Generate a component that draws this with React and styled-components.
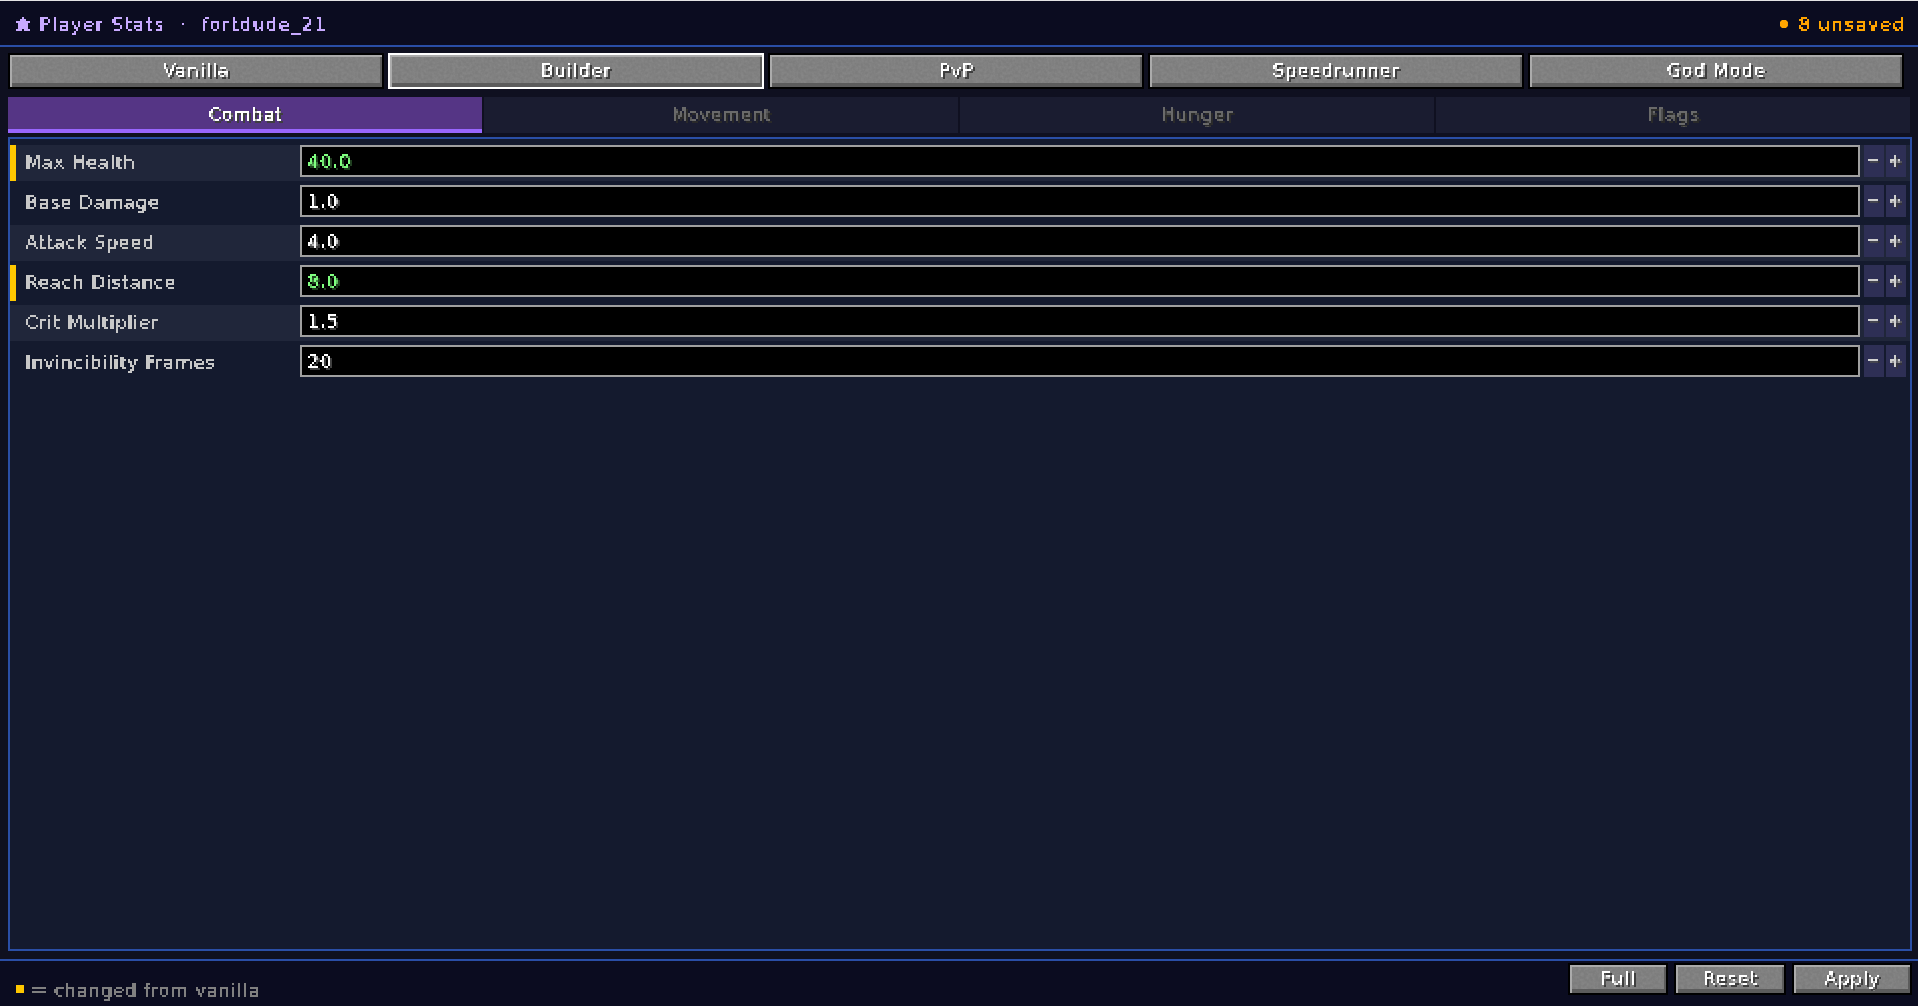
import React from 'react';
import styled, { createGlobalStyle, css } from 'styled-components';

const presets = ['Vanilla', 'Builder', 'PvP', 'Speedrunner', 'God Mode'];
const tabs = [
	{ name: 'Combat', spacing: 0.5 },
	{ name: 'Movement', spacing: 0.5 },
	{ name: 'Hunger', spacing: 1.2 },
	{ name: 'Flags', spacing: 1.2 },
];
const stats = [
	{ label: 'Max Health', value: '40.0', changed: true },
	{ label: 'Base Damage', value: '1.0' },
	{ label: 'Attack Speed', value: '4.0' },
	{ label: 'Reach Distance', value: '8.0', changed: true },
	{ label: 'Crit Multiplier', value: '1.5' },
	{ label: 'Invincibility Frames', value: '20' },
];

const noise = `url("data:image/svg+xml,%3Csvg xmlns='http://www.w3.org/2000/svg' width='160' height='80'%3E%3Cfilter id='n'%3E%3CfeTurbulence type='fractalNoise' baseFrequency='.35' numOctaves='2' seed='4'/%3E%3CfeColorMatrix values='0 0 0 0 .5 0 0 0 0 .5 0 0 0 0 .5 .9 0 0 0 -.3'/%3E%3C/filter%3E%3Crect width='160' height='80' filter='url(%23n)' opacity='.35'/%3E%3C/svg%3E")`;

const GlobalStyle = createGlobalStyle`
	html, body {
		margin: 0;
		height: 100%;
		overflow: hidden;
		background: #0f1020;
	}
`;

const pixelText = css`
	font-family: 'DejaVu Sans', sans-serif;
	line-height: 20px;
	white-space: pre;
`;

// text blocks snapped to the 2px grid of the game font
const Txt = styled.span`
	${pixelText}
	display: inline-block;
	padding: 2px 4px;
	margin: -2px -4px;
	font-size: ${(p) => p.$size || 18}px;
	letter-spacing: ${(p) => p.$spacing ?? 1}px;
	color: ${(p) => p.$color || '#fff'};
	filter: url(#pixel);
	text-shadow: ${(p) => (p.$shadow ? `2px 2px 0 ${p.$shadow}` : 'none')};
`;

const Page = styled.div`
	display: flex;
	flex-direction: column;
	height: 100vh;
`;

const Header = styled.header`
	display: flex;
	align-items: center;
	justify-content: space-between;
	box-sizing: border-box;
	height: 47px;
	padding: 2px 13px 0 16px;
	background: #0b0c20;
	border-top: 1px solid #e4e4e4;
	border-bottom: 2px solid #2a4ea6;
`;

const Title = styled.div`
	display: flex;
	align-items: center;
`;

const TitleName = styled.div`
	margin-left: 9px;
`;

const TitleDot = styled.div`
	margin-left: 16px;
`;

const TitleUser = styled.div`
	margin-left: 16px;
`;

const Unsaved = styled.div`
	display: flex;
	align-items: center;
	gap: 10px;
`;

const Dot = styled.i`
	display: block;
	width: 8px;
	height: 8px;
	background: #ffa500;
	clip-path: polygon(25% 0, 75% 0, 100% 25%, 100% 75%, 75% 100%, 25% 100%, 0 75%, 0 25%);
`;

const McButton = styled.button`
	display: flex;
	align-items: center;
	justify-content: center;
	box-sizing: border-box;
	padding: 0 0 2px;
	border: 2px solid ${(p) => (p.$selected ? '#fff' : '#000')};
	background-color: #7d7d7d;
	background-image: ${noise};
	box-shadow:
		inset 2px 2px 0 #ababab,
		inset -2px 0 0 #5c5c5c,
		inset 0 -4px 0 #5c5c5c;
`;

const PresetRow = styled.div`
	display: grid;
	grid-template-columns: repeat(5, 1fr);
	gap: 4px;
	height: 36px;
	margin: 6px 14px 0 8px;

	${McButton} {
		height: 36px;
	}
`;

const TabRow = styled.div`
	display: grid;
	grid-template-columns: repeat(4, 1fr);
	gap: 2px;
	height: 36px;
	margin: 8px 8px 0;
`;

const Tab = styled.div`
	display: flex;
	align-items: center;
	justify-content: center;
	box-sizing: border-box;
	padding-top: 2px;
	background: ${(p) => (p.$active ? '#553585' : '#1a1c30')};
	border-bottom: 4px solid ${(p) => (p.$active ? '#9966ff' : '#1a1c30')};
`;

const Panel = styled.main`
	flex: 1;
	display: flex;
	flex-direction: column;
	gap: 4px;
	margin: 4px 6px 0 8px;
	padding: 6px 0 0;
	background: #141a2e;
	border: 2px solid #2a4ea6;
`;

const Row = styled.div`
	display: flex;
	box-sizing: border-box;
	height: 36px;
	padding-right: 4px;
	background: ${(p) => (p.$alt ? '#20263a' : 'transparent')};
	border-left: 6px solid ${(p) => (p.$changed ? '#ffc800' : 'transparent')};
`;

const Label = styled.div`
	flex: 0 0 284px;
	display: flex;
	align-items: center;
	box-sizing: border-box;
	padding: 0 0 2px 9px;
`;

const Field = styled.div`
	flex: 1;
	display: flex;
	align-items: center;
	box-sizing: border-box;
	height: 32px;
	padding-left: 5px;
	background: #000;
	border: 2px solid #a0a0a0;
`;

const Step = styled.div`
	flex: 0 0 20px;
	display: flex;
	align-items: center;
	justify-content: center;
	height: 32px;
	margin-left: ${(p) => p.$gap}px;
	padding: 0 2px 2px 0;
	box-sizing: border-box;
	background: #2e2f55;
`;

const Footer = styled.footer`
	display: flex;
	justify-content: space-between;
	box-sizing: border-box;
	height: 47px;
	margin-top: 8px;
	padding: 2px 6px 0 16px;
	background: #0b0c20;
	border-top: 2px solid #2a4ea6;
`;

const Legend = styled.div`
	display: flex;
	align-items: center;
	gap: 5px;
	height: 22px;
	margin-top: 16px;
`;

const LegendMark = styled.i`
	display: block;
	width: 8px;
	height: 8px;
	margin-bottom: 2px;
	background: #ffc800;
`;

const Actions = styled.div`
	display: flex;
	gap: 6px;

	${McButton} {
		height: 32px;
	}
`;

const ActionButton = styled(McButton)`
	width: ${(p) => p.$width}px;
`;

function Star() {
	return (
		<svg width="14" height="14" viewBox="0 0 7 7" shapeRendering="crispEdges" fill="#c8aaff">
			<path d="M3 0h1v1h1v1h2v1H6v3h1v1H4V6H3v1H0V6h1V3H0V2h2V1h1z" />
		</svg>
	);
}

function App() {
	return (
		<Page>
			<GlobalStyle />
			<svg width="0" height="0" style={{ position: 'absolute' }} aria-hidden="true">
				<filter id="pixel" x="-2%" y="-2%" width="104%" height="104%" colorInterpolationFilters="sRGB">
					<feFlood x="1" y="1" width="1" height="1" floodColor="#000" />
					<feComposite width="2" height="2" />
					<feTile result="grid" />
					<feComposite in="SourceGraphic" in2="grid" operator="in" />
					<feConvolveMatrix order="2" kernelMatrix="1 1 1 1" divisor="1" preserveAlpha="false" />
					<feComponentTransfer>
						<feFuncA type="discrete" tableValues="0 1 1 1" />
					</feComponentTransfer>
				</filter>
			</svg>
			<Header>
				<Title>
					<Star />
					<TitleName>
						<Txt $color="#c8aaff" $spacing={1.5}>Player Stats</Txt>
					</TitleName>
					<TitleDot>
						<Txt $color="#c8aaff" $size={12}>·</Txt>
					</TitleDot>
					<TitleUser>
						<Txt $color="#c8aaff" $spacing={1.5}>fortdude_21</Txt>
					</TitleUser>
				</Title>
				<Unsaved>
					<Dot />
					<Txt $color="#ffa500" $spacing={1.5}>8 unsaved</Txt>
				</Unsaved>
			</Header>
			<PresetRow>
				{presets.map((name) => (
					<McButton key={name} $selected={name === 'Builder'}>
						<Txt $shadow="#3f3f3f">{name}</Txt>
					</McButton>
				))}
			</PresetRow>
			<TabRow>
				{tabs.map((tab) => (
					<Tab key={tab.name} $active={tab.name === 'Combat'}>
						{tab.name === 'Combat' ? (
							<Txt $shadow="#3f3f3f" $spacing={tab.spacing}>{tab.name}</Txt>
						) : (
							<Txt $color="#6a6a6a" $shadow="#2a2a2a" $spacing={tab.spacing}>
								{tab.name}
							</Txt>
						)}
					</Tab>
				))}
			</TabRow>
			<Panel>
				{stats.map((stat, i) => (
					<Row key={stat.label} $alt={i % 2 === 0} $changed={stat.changed}>
						<Label>
							<Txt $color="#c8c8c8" $spacing={0.8}>{stat.label}</Txt>
						</Label>
						<Field>
							<Txt
								$color={stat.changed ? '#80ff80' : '#fff'}
								$shadow={stat.changed ? '#203f20' : '#3f3f3f'}
							>
								{stat.value}
							</Txt>
						</Field>
						<Step $gap={4}>
							<Txt $color="#d0d0d0" $shadow="#34343f">−</Txt>
						</Step>
						<Step $gap={2}>
							<Txt $color="#d0d0d0" $shadow="#34343f">+</Txt>
						</Step>
					</Row>
				))}
			</Panel>
			<Footer>
				<Legend>
					<LegendMark />
					<Txt $color="#808080" $size={22}>=</Txt>
					<Txt $color="#808080" $spacing={0.8}>changed from vanilla</Txt>
				</Legend>
				<Actions>
					<ActionButton $width={100}>
						<Txt $shadow="#3f3f3f">Full</Txt>
					</ActionButton>
					<ActionButton $width={112}>
						<Txt $shadow="#3f3f3f">Reset</Txt>
					</ActionButton>
					<ActionButton $width={120}>
						<Txt $shadow="#3f3f3f">Apply</Txt>
					</ActionButton>
				</Actions>
			</Footer>
		</Page>
	);
}

export default App;
